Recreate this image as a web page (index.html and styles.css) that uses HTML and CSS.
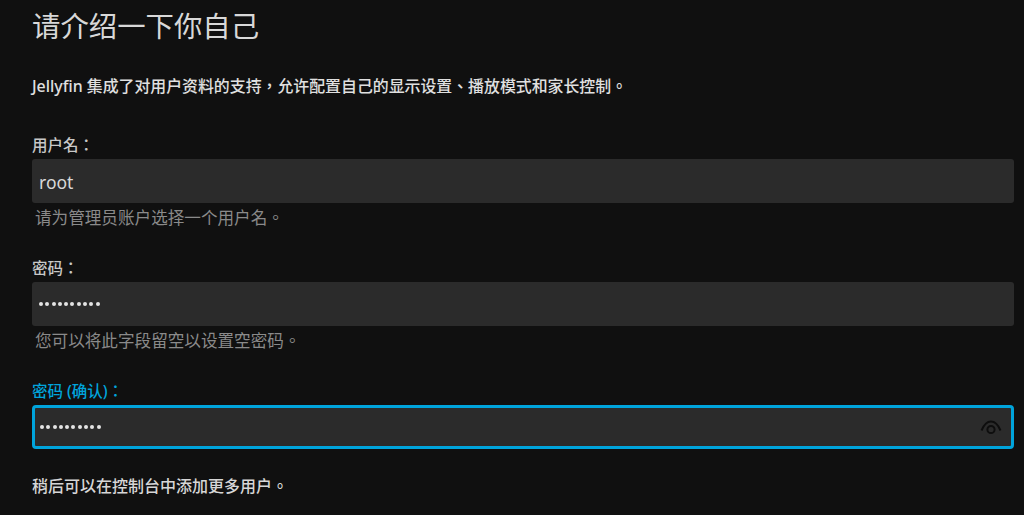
FILE: index.html
```html
<!DOCTYPE html>
<html lang="zh-TW">
<head>
<meta charset="utf-8">
<title>Jellyfin</title>
<link rel="stylesheet" href="styles.css">
</head>
<body>
<main class="page">
  <h1 class="title">请介绍一下你自己</h1>
  <p class="intro">Jellyfin 集成了对用户资料的支持，允许配置自己的显示设置、播放模式和家长控制。</p>
  <div class="field">
    <label class="label">用户名：</label>
    <div class="input"><span class="value">root</span></div>
    <div class="hint">请为管理员账户选择一个用户名。</div>
  </div>
  <div class="field">
    <label class="label">密码：</label>
    <div class="input"><span class="dots"><i></i><i></i><i></i><i></i><i></i><i></i><i></i><i></i><i></i><i></i></span></div>
    <div class="hint">您可以将此字段留空以设置空密码。</div>
  </div>
  <div class="field field-focus">
    <label class="label">密码 (确认)：</label>
    <div class="input">
      <span class="dots"><i></i><i></i><i></i><i></i><i></i><i></i><i></i><i></i><i></i><i></i></span>
      <svg class="eye" viewBox="0 0 24 24" width="24" height="24" aria-hidden="true">
        <path d="M2.5 15.5C5 9.5 8.5 6.5 12 6.5s7 3 9.5 9" fill="none" stroke="#0e0e0e" stroke-width="2"/>
        <circle cx="12" cy="14.5" r="3.6" fill="none" stroke="#0e0e0e" stroke-width="2"/>
      </svg>
    </div>
  </div>
  <p class="footer">稍后可以在控制台中添加更多用户。</p>
</main>
</body>
</html>
```
FILE: styles.css
```css
html, body {
  margin: 0;
  height: 100%;
  overflow: hidden;
  background: #101010;
}
.page {
  padding: 0 10px 0 32px;
  font-family: "Noto Sans", "Noto Sans CJK TC", sans-serif;
  color: #d6d6d6;
}
.title {
  margin: 0;
  padding-top: 6px;
  height: 46px;
  line-height: 40px;
  font-size: 28.4px;
  font-weight: 400;
  color: #d8d8d8;
}
.intro {
  margin: 22px 0 0;
  height: 24px;
  line-height: 24px;
  font-size: 15.9px;
  font-weight: 500;
  color: #e0e0e0;
}
.field {
  display: flex;
  flex-direction: column;
}
.intro + .field {
  margin-top: 35px;
}
.field + .field {
  margin-top: 23px;
}
.label {
  height: 26px;
  line-height: 24px;
  font-size: 15.5px;
  font-weight: 500;
  color: #c8c8c8;
}
.input {
  display: flex;
  align-items: center;
  justify-content: space-between;
  box-sizing: border-box;
  height: 44px;
  padding: 0 8px 0 7px;
  background: #2b2b2b;
  border-radius: 3px;
}
.value {
  position: relative;
  top: 1px;
  font-size: 17.5px;
  color: #d8d8d8;
}
.dots {
  display: flex;
  gap: 2.3px;
}
.dots i {
  width: 4px;
  height: 4px;
  border-radius: 50%;
  background: #e4e4e4;
}
.hint {
  height: 30px;
  line-height: 30px;
  padding-left: 3px;
  font-size: 16.6px;
  color: #8a8a8a;
}
.field-focus .label {
  color: #00a4dc;
}
.field-focus .input {
  border: 3px solid #00a4dc;
  padding: 0 8px 0 5px;
  border-radius: 4px;
}
.eye {
  display: block;
}
.footer {
  margin: 25px 0 0;
  height: 24px;
  line-height: 24px;
  font-size: 16px;
  font-weight: 500;
  color: #d6d6d6;
}
```
